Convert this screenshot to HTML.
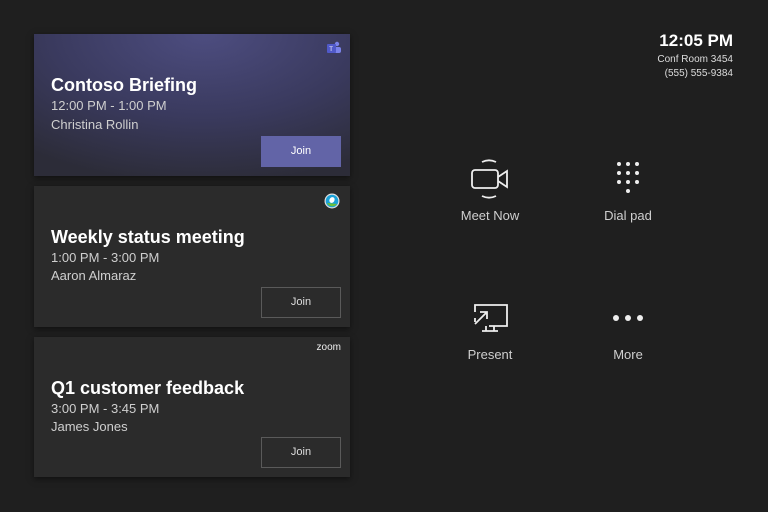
<!DOCTYPE html>
<html><head><style>
body{margin:0;width:768px;height:512px;background:#1f1f1f;font-family:"Liberation Sans",sans-serif;color:#fff;position:relative;overflow:hidden}
.card{position:absolute;left:34px;width:316px;background:#2b2b2b;box-shadow:0 2px 6px rgba(0,0,0,.5)}
.c1{top:34px;height:142px;background:radial-gradient(ellipse 280px 150px at 170px 0px,#4d4d80,#3a3a5e 55%,#2c2c38 100%)}
.c2{top:186px;height:141px}.c3{top:337px;height:140px}
.t{position:absolute;left:17px;font-size:18px;font-weight:bold}
.s{position:absolute;left:17px;font-size:13px;color:#cfcfcf}
.j{position:absolute;left:227px;bottom:9px;width:80px;height:31px;border:1px solid #5a5a5a;box-sizing:border-box;font-size:11px;text-align:center;line-height:29px;color:#ddd}
.c1 .j{background:#6264a7;border-color:#6264a7;color:#fff}
.lbl{position:absolute;font-size:13px;color:#cfcfcf;text-align:center;width:120px}
svg{position:absolute}
</style></head><body>
<div class="card c1">
<svg style="left:292px;top:7px" width="16" height="14" viewBox="0 0 16 14"><circle cx="11" cy="3" r="2.2" fill="#7b83eb"/><rect x="8" y="6" width="7" height="6" rx="2" fill="#7b83eb"/><rect x="1" y="3" width="9" height="9" rx="1" fill="#5059c9"/><text x="3.3" y="10" font-size="6" fill="#fff" font-family="Liberation Sans">T</text></svg>
<div class="t" style="top:41px">Contoso Briefing</div>
<div class="s" style="top:64px">12:00 PM - 1:00 PM</div>
<div class="s" style="top:83px">Christina Rollin</div>
<div class="j">Join</div></div>
<div class="card c2">
<svg style="left:290px;top:7px" width="16" height="16" viewBox="0 0 16 16"><circle cx="8" cy="8" r="7.5" fill="#e0e0e0"/><circle cx="8" cy="8" r="6.3" fill="#1aa1d8"/><path d="M3 10a6 6 0 0 0 10 1z" fill="#6bbf3a"/><ellipse cx="8" cy="7" rx="2.5" ry="3" fill="#fff" transform="rotate(30 8 7)"/></svg>
<div class="t" style="top:41px">Weekly status meeting</div>
<div class="s" style="top:64px">1:00 PM - 3:00 PM</div>
<div class="s" style="top:82px">Aaron Almaraz</div>
<div class="j">Join</div></div>
<div class="card c3">
<div style="position:absolute;right:9px;top:5px;font-size:10px;color:#eee">zoom</div>
<div class="t" style="top:41px">Q1 customer feedback</div>
<div class="s" style="top:64px">3:00 PM - 3:45 PM</div>
<div class="s" style="top:82px">James Jones</div>
<div class="j">Join</div></div>

<div style="position:absolute;right:35px;top:31px;font-size:17px;font-weight:bold">12:05 PM</div>
<div style="position:absolute;right:35px;top:53px;font-size:10px;color:#ddd;text-align:right;line-height:14px">Conf Room 3454<br>(555) 555-9384</div>

<svg style="left:470px;top:159px" width="40" height="40" viewBox="0 0 40 40" fill="none" stroke="#eee" stroke-width="1.8"><path d="M12 3a16 16 0 0 1 14 0M12 37a16 16 0 0 0 14 0"/><rect x="2" y="11" width="26" height="18" rx="3"/><path d="M28 18l9-6v16l-9-6"/></svg>
<div class="lbl" style="left:430px;top:208px">Meet Now</div>
<svg style="left:614px;top:160px" width="30" height="36" viewBox="0 0 30 36" fill="#eee"><circle cx="5" cy="4" r="2"/><circle cx="14" cy="4" r="2"/><circle cx="23" cy="4" r="2"/><circle cx="5" cy="13" r="2"/><circle cx="14" cy="13" r="2"/><circle cx="23" cy="13" r="2"/><circle cx="5" cy="22" r="2"/><circle cx="14" cy="22" r="2"/><circle cx="23" cy="22" r="2"/><circle cx="14" cy="31" r="2"/></svg>
<div class="lbl" style="left:568px;top:208px">Dial pad</div>
<svg style="left:472px;top:302px" width="36" height="32" viewBox="0 0 36 32" fill="none" stroke="#eee" stroke-width="1.8"><path d="M3 10V3h32v21H17M3 16v4"/><path d="M3 22L15 10M8 10h7v7"/><path d="M14 24v5M22 24v5M10 29h16"/></svg>
<div class="lbl" style="left:430px;top:347px">Present</div>
<svg style="left:610px;top:312px" width="36" height="12" viewBox="0 0 36 12" fill="#eee"><circle cx="6" cy="6" r="3"/><circle cx="18" cy="6" r="3"/><circle cx="30" cy="6" r="3"/></svg>
<div class="lbl" style="left:568px;top:347px">More</div>
</body></html>
